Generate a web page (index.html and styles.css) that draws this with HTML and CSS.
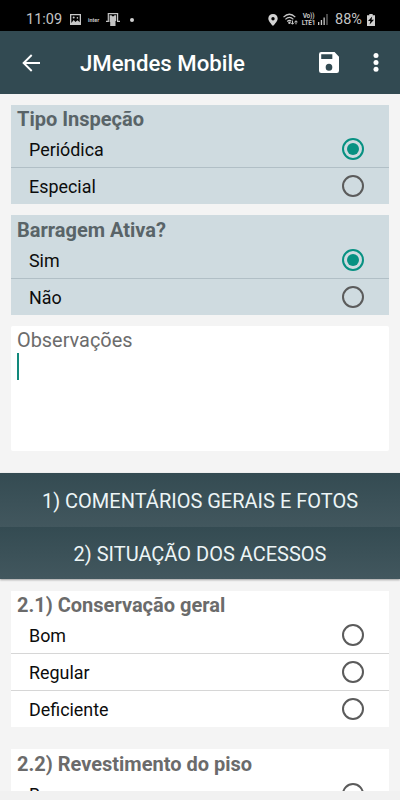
FILE: index.html
```html
<!DOCTYPE html>
<html lang="pt-BR">
<head>
<meta charset="utf-8">
<title>JMendes Mobile</title>
<link rel="stylesheet" href="styles.css">
</head>
<body>
<div class="screen">
  <div class="status">
    <span class="clock">11:09</span>
    <svg class="ic-photo" width="11" height="11" viewBox="0 0 11 11"><path fill="#c8c8c8" fill-rule="evenodd" d="M0 0h11v11H0zM1.3 1.3v7.8l2.4-3 1.7 1.8 2.1-1.6 2.2 2V1.3z"/><circle cx="3.7" cy="3.6" r="1" fill="#c8c8c8"/><circle cx="7.4" cy="3.9" r=".8" fill="#c8c8c8"/></svg>
    <span class="inter">inter</span>
    <svg class="ic-device" width="14" height="13" viewBox="0 0 14 13"><path fill="none" stroke="#c4c4c4" stroke-width="1.2" d="M0 8.4h2.3V.7h9.3v7.700H14"/><path fill="#c4c4c4" d="M3.600 2.300h1.900l.7 1h1.600l.7-1h1.700V8H9.500v5H4.200V9h-.6z"/></svg>
    <span class="dot"></span>
    <span class="grow"></span>
    <svg class="ic-pin" width="10" height="12" viewBox="0 0 10 12"><path fill="#d2d2d2" fill-rule="evenodd" d="M5 0C2.2 0 .3 2 .3 4.6.3 7.7 5 12 5 12s4.700-4.300 4.700-7.400C9.700 2 7.800 0 5 0zm0 3a1.700 1.700 0 1 1 0 3.400A1.700 1.700 0 0 1 5 3z"/></svg>
    <svg class="ic-wifi" width="15" height="13" viewBox="0 0 15 13"><g fill="none" stroke="#c8c8c8" stroke-width="1.2"><path d="M.5 4.200Q6.400-1.700 12.300 4.200M2.400 6.400Q6.400 2.500 10.400 6.400M4.200 8.500Q6.400 6.400 8.300 8.200"/><path stroke-width="1" d="M9.500 7.500V11M8 9.700l1.500 1.600L11 9.700M13 11.300V8M11.500 9.300L13 7.700l1.500 1.600"/></g><circle cx="6.400" cy="9.800" r="1.200" fill="#c8c8c8"/></svg>
    <span class="lte"><span>Vo))</span><span>LTE1</span></span>
    <svg class="ic-signal" width="10" height="11" viewBox="0 0 10 11"><path fill="#c8c8c8" d="M0 8h1.300v3H0zM2.800 6h1.300v5H2.800zM5.500 3.500h1.300V11H5.500z"/><path fill="#656565" d="M8.300 0h1.400v11H8.300z"/></svg>
    <span class="pct">88%</span>
    <svg class="ic-batt" width="8" height="12" viewBox="0 0 8 12"><path fill="#d0d0d0" d="M2.300 0h3.400v1.300H8V12H0V1.300h2.300z"/><path fill="#000" d="M5.200 2.500L1 7h2.400l-.8 3.400L7 5.800H4.500z"/></svg>
  </div>

  <header class="appbar">
    <svg class="back" width="18" height="18" viewBox="0 0 18 18"><path fill="none" stroke="#fff" stroke-width="1.900" d="M18 9H1.500M9.700 1L1.600 9l8.100 8"/></svg>
    <h1>JMendes Mobile</h1>
    <svg class="save" width="20" height="21" viewBox="3 3 18 18" preserveAspectRatio="none"><path fill="#fff" d="M17 3H5a2 2 0 0 0-2 2v14a2 2 0 0 0 2 2h14a2 2 0 0 0 2-2V7l-4-4zm-5 16a3 3 0 1 1 0-6 3 3 0 0 1 0 6zm3-10H5V5h10v4z"/></svg>
    <svg class="more" width="6" height="19" viewBox="0 0 6 19"><g fill="#fff"><circle cx="3" cy="2.600" r="2.500"/><circle cx="3" cy="9.500" r="2.500"/><circle cx="3" cy="16.200" r="2.500"/></g></svg>
  </header>

  <main class="form">
    <section class="card tinted">
      <h2>Tipo Inspeção</h2>
      <div class="row"><span>Periódica</span><i class="radio on"></i></div>
      <div class="row"><span>Especial</span><i class="radio"></i></div>
    </section>
    <section class="card tinted second">
      <h2>Barragem Ativa?</h2>
      <div class="row"><span>Sim</span><i class="radio on"></i></div>
      <div class="row"><span>Não</span><i class="radio"></i></div>
    </section>
    <section class="notes">
      <label>Observações</label>
      <div class="caret"></div>
    </section>
    <div class="bars">
      <div class="bar first"><span>1) COMENTÁRIOS GERAIS E FOTOS</span></div>
      <div class="bar"><span>2) SITUAÇÃO DOS ACESSOS</span></div>
    </div>
    <section class="card third">
      <h2>2.1) Conservação geral</h2>
      <div class="row"><span>Bom</span><i class="radio"></i></div>
      <div class="row"><span>Regular</span><i class="radio"></i></div>
      <div class="row"><span>Deficiente</span><i class="radio"></i></div>
    </section>
    <section class="card fourth">
      <h2>2.2) Revestimento do piso</h2>
      <div class="row"><span>Bom</span><i class="radio"></i></div>
    </section>
  </main>
  <footer class="bottom"></footer>
</div>
</body>
</html>
```
FILE: styles.css
```css
* { box-sizing: border-box; }
body { margin: 0; font-family: Roboto, sans-serif; background: #f4f4f4; }
.screen { width: 400px; height: 800px; display: flex; flex-direction: column; overflow: hidden; }

.status { flex: none; height: 31px; background: #000; color: #c4c4c4; display: flex; align-items: center; padding: 8px 25px 0 26px; }
.status > * { flex: none; }
.status > .grow { flex: 1; }
.clock { width: 44px; font-size: 14.5px; line-height: 22px; white-space: nowrap; }
.inter { width: 18px; margin-left: 7px; font-size: 5.4px; font-weight: 700; line-height: 10px; }
.dot { width: 4px; height: 4px; border-radius: 50%; background: #d0d0d0; margin-left: 10px; }
.ic-wifi { margin-left: 5px; }
.lte { display: flex; flex-direction: column; margin-left: 3px; width: 15px; font-size: 6.5px; font-weight: 700; line-height: 7px; text-align: center; letter-spacing: -.2px; }
.ic-signal { margin-left: 2px; }
.pct { margin-left: 7px; width: 32px; font-size: 14.5px; line-height: 22px; white-space: nowrap; }

.appbar { flex: none; height: 63px; background: #324a52; display: flex; align-items: center; padding: 0 21px 0 22px; }
.appbar h1 { flex: 1; margin: 0 0 0 40px; padding-top: 1px; color: #fff; font-size: 22.2px; font-weight: 500; line-height: 30px; white-space: nowrap; }
.more { margin-left: 34px; }

.form { flex: none; height: 697px; overflow: hidden; padding-top: 11px; }
.card { margin: 0 11px; background: #fff; }
.tinted { background: #cfdbe0; }
.card h2 { margin: 0; height: 26px; padding: 2px 0 0 6px; color: #6b6b6b; font-size: 20px; font-weight: 700; line-height: 25px; white-space: nowrap; }
.tinted h2 { color: #596468; }
.row { height: 36px; display: flex; align-items: center; justify-content: space-between; padding: 0 25px 0 18px; color: #0c0c0c; font-size: 17.9px; line-height: 24px; }
.row span { padding-top: 2px; }
.row + .row { height: 37px; border-top: 1px solid #d6d6d6; }
.tinted .row + .row { border-color: #b1bfc6; }
.radio { width: 22px; height: 22px; border: 2px solid #5b5b5b; border-radius: 50%; display: flex; align-items: center; justify-content: center; }
.radio.on { border-color: #079182; }
.radio.on::after { content: ""; width: 12px; height: 12px; border-radius: 50%; background: #079182; }
.second { margin-top: 11px; height: 100px; }
.second h2, .fourth h2 { height: 27px; padding-top: 3px; }

.notes { margin: 11px 11px 0; height: 125px; background: #fff; border-radius: 2px; padding: 2px 6px 0; }
.notes label { display: block; color: #6c6c6c; font-size: 19.9px; line-height: 25px; }
.caret { width: 2px; height: 27px; background: #12897b; }

.bars { margin-top: 22px; box-shadow: 0 1px 2px rgba(0,0,0,.35); }
.bar { height: 52px; padding-top: 1px; display: flex; align-items: center; justify-content: center; background: linear-gradient(#344b52, #42575e); color: #edf5f6; font-size: 20px; line-height: 28px; white-space: nowrap; }
.bar.first { height: 54px; }
.third { margin-top: 12px; }
.fourth { margin-top: 22px; }
.bottom { flex: none; height: 9px; background: #f1f1f1; }
```
